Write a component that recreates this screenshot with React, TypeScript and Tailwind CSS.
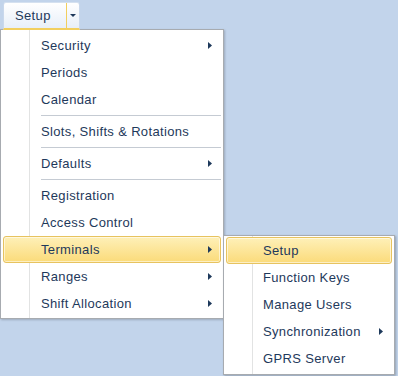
import React from 'react';

type Item = { label: string; sub?: boolean; active?: boolean } | 'sep';

const mainItems: Item[] = [
  { label: 'Security', sub: true },
  { label: 'Periods' },
  { label: 'Calendar' },
  'sep',
  { label: 'Slots, Shifts & Rotations' },
  'sep',
  { label: 'Defaults', sub: true },
  'sep',
  { label: 'Registration' },
  { label: 'Access Control' },
  { label: 'Terminals', sub: true, active: true },
  { label: 'Ranges', sub: true },
  { label: 'Shift Allocation', sub: true },
];

const terminalItems: Item[] = [
  { label: 'Setup', active: true },
  { label: 'Function Keys' },
  { label: 'Manage Users' },
  { label: 'Synchronization', sub: true },
  { label: 'GPRS Server' },
];

function RightArrow() {
  return (
    <svg width="4" height="7" viewBox="0 0 4 7" className="shrink-0">
      <polygon points="0,0 4,3.5 0,7" fill="#1e395b" />
    </svg>
  );
}

function MenuRow({ item, textPad, children }: { item: Exclude<Item, 'sep'>; textPad: string; children?: React.ReactNode }) {
  return (
    <div
      className={`relative mx-[2px] flex h-[27px] items-center justify-between rounded-[3px] border pr-[8px] ${textPad} ${
        item.active
          ? 'border-[#e7c35f] bg-[linear-gradient(to_bottom,#fef0b8,#fbdb7a)] shadow-[inset_0_0_0_1px_rgba(255,255,255,0.55)]'
          : 'border-transparent'
      }`}
    >
      <span>{item.label}</span>
      {item.sub && <RightArrow />}
      {children}
    </div>
  );
}

function TerminalsMenu() {
  return (
    <div className="absolute left-[219px] top-[-2px] z-20 h-[140px] w-[172px] border border-[#a7abb0] bg-[linear-gradient(to_right,#ffffff_28px,#e2e3e3_28px,#e2e3e3_29px,#ffffff_29px)] pt-[1px] shadow-[1px_1px_2px_rgba(0,0,0,0.25)]">
      {terminalItems.map((it, i) =>
        it === 'sep' ? null : <MenuRow key={i} item={it} textPad="pl-[36px]" />
      )}
    </div>
  );
}

export default function App() {
  return (
    <div className="relative h-[376px] w-[398px] overflow-hidden bg-[#c2d4eb] font-['Liberation_Sans',Arial,sans-serif] text-[13px] tracking-[0.35px] text-[#1e395b]">
      {/* ribbon split button */}
      <div className="relative z-10 ml-[3px] pt-[2px]">
        <div className="flex h-[28px] w-[77px] rounded-t-[3px] border-x border-t border-b-2 border-x-[#c9d8ec] border-t-[#d5e1f0] border-b-[#f2cf5e] bg-[linear-gradient(to_bottom,#ffffff,#f3f7fc_50%,#e8eff8)]">
          <div className="flex w-[62px] items-center pl-[11px]">Setup</div>
          <div className="w-px bg-[#f2cf5e]" />
          <div className="flex flex-1 items-center justify-center">
            <svg width="6" height="3" viewBox="0 0 6 3">
              <polygon points="0,0 6,0 3,3" fill="#1e395b" />
            </svg>
          </div>
        </div>
      </div>

      {/* dropdown */}
      <div className="absolute left-0 top-[29px] h-[290px] w-[224px] border border-[#a7abb0] bg-[linear-gradient(to_right,#ffffff_28px,#e2e3e3_28px,#e2e3e3_29px,#ffffff_29px)] pt-[2px] shadow-[1px_1px_2px_rgba(0,0,0,0.2)]">
        {mainItems.map((it, i) =>
          it === 'sep' ? (
            <div key={i} className="flex h-[5px] items-center pl-[40px] pr-[2px]">
              <div className="h-px w-full bg-[#c5cbd3]" />
            </div>
          ) : (
            <MenuRow key={i} item={it} textPad="pl-[37px]">
              {it.label === 'Terminals' && <TerminalsMenu />}
            </MenuRow>
          )
        )}
      </div>
    </div>
  );
}
